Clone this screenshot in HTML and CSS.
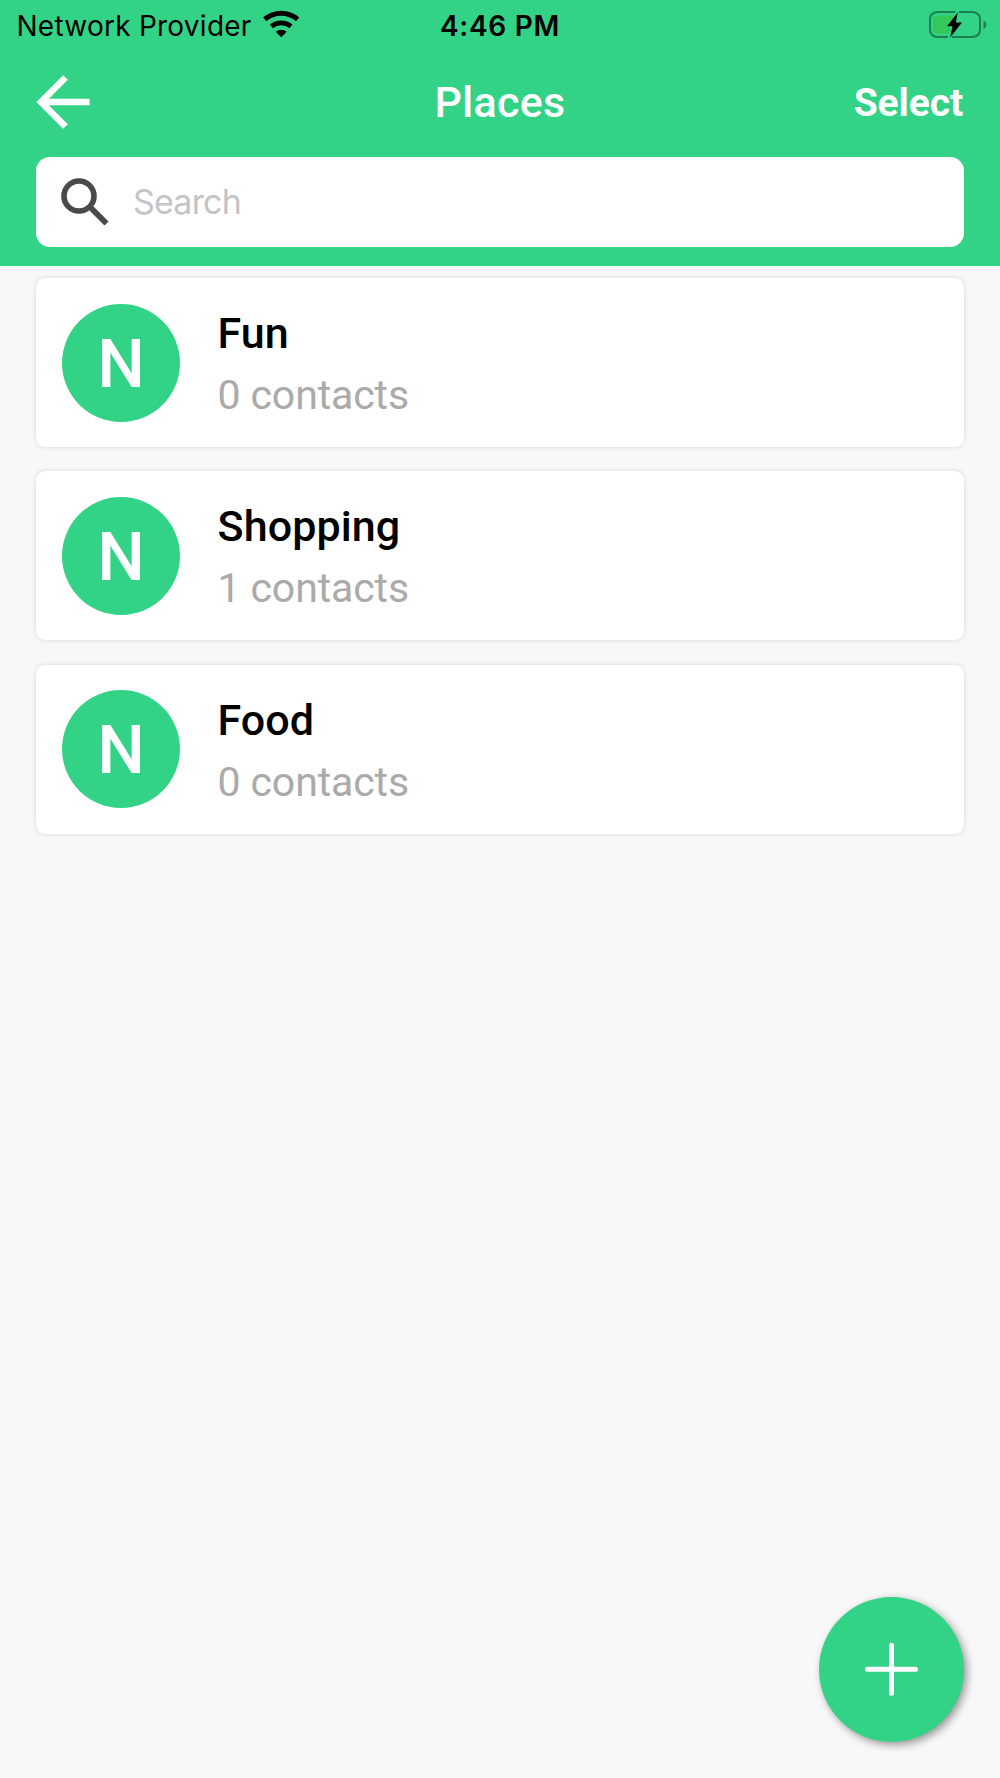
FILE: index.html
```html
<!DOCTYPE html>
<html lang="en">
<head>
<meta charset="utf-8">
<title>Places</title>
<link rel="stylesheet" href="styles.css">
</head>
<body>
<div class="screen">
  <header class="header">
    <div class="status">
      <div class="carrier">
        <span class="carrier-name">Network Provider</span>
        <svg class="wifi" width="38" height="28" viewBox="0 0 38 28">
          <path d="M1.8 9.4A25 25 0 0 1 34.6 9.4" fill="none" stroke="#000" stroke-width="5"/>
          <path d="M8.4 16.4A15.5 15.5 0 0 1 28 16.4" fill="none" stroke="#000" stroke-width="4.8"/>
          <path d="M12.7 21.8A8.8 8.8 0 0 1 23.7 21.8L18.2 27.2Z"/>
        </svg>
      </div>
      <span class="time">4:46 PM</span>
      <svg class="battery" width="60" height="30" viewBox="0 0 60 30">
        <path d="M27.5 2H10.5Q2 2 2 9.5V19.5Q2 27 10.5 27H20M31 2H43.5Q52 2 52 9.5V19.5Q52 27 43.5 27H24" fill="none" stroke="#1e8050" stroke-width="2"/>
        <path d="M28 5.5H10Q5 5.500 5 10V19Q5 23.500 10 23.500H21.500L23.500 17.500H17.500Z" fill="#34c759"/>
        <path d="M55.500 10.500Q58.500 12 58.500 14.700T55.500 19.500Z" fill="#1e8050"/>
        <path d="M29.800 2.500L19 16.300H24.500L22.200 27.500L34 12.500H27.800Z"/>
      </svg>
    </div>
    <nav class="nav">
      <svg class="back" width="54" height="54" viewBox="0 0 54 54">
        <path d="M29.500 2.500L5 27L29.500 51.500M5 27H53.500" fill="none" stroke="#fff" stroke-width="6.600"/>
      </svg>
      <h1 class="title">Places</h1>
      <span class="select">Select</span>
    </nav>
    <div class="search">
      <svg class="magnifier" width="48" height="48" viewBox="0 0 48 48">
        <circle cx="18" cy="18" r="15" fill="none" stroke="#4a4a4a" stroke-width="5.600"/>
        <path d="M30.500 30.500L45.500 45.500" stroke="#4a4a4a" stroke-width="5.800"/>
        <path d="M27.500 27.500L32 32" stroke="#4a4a4a" stroke-width="4"/>
      </svg>
      <span class="placeholder">Search</span>
    </div>
  </header>
  <main class="list">
    <article class="card">
      <div class="avatar">N</div>
      <div class="info"><div class="name">Fun</div><div class="count">0 contacts</div></div>
    </article>
    <article class="card">
      <div class="avatar">N</div>
      <div class="info"><div class="name">Shopping</div><div class="count">1 contacts</div></div>
    </article>
    <article class="card">
      <div class="avatar">N</div>
      <div class="info"><div class="name">Food</div><div class="count">0 contacts</div></div>
    </article>
  </main>
  <div class="fab">
    <svg width="54" height="54" viewBox="0 0 54 54">
      <path d="M27.500 3.200V51.300M3.400 27.300H51.600" stroke="#fff" stroke-width="5" stroke-linecap="round"/>
    </svg>
  </div>
</div>
</body>
</html>
```
FILE: styles.css
```css
* { box-sizing: border-box; }
body { margin: 0; background: #f8f8f8; font-family: Roboto, sans-serif; }
.screen { position: relative; width: 1000px; height: 1778px; overflow: hidden; background: #f8f8f8; }
.header { height: 266px; background: #32d386; }
.status {
  display: grid; grid-template-columns: 1fr auto 1fr; height: 50px;
  padding: 0 12px 0 16px; line-height: 52px; font-family: Inter, sans-serif; font-size: 28px; color: #000;
}
.carrier { display: flex; gap: 11px; padding-left: 0.5px; }
.carrier-name { letter-spacing: 0.25px; white-space: nowrap; }
.wifi { margin-top: 10px; flex: none; }
.time { margin-left: -4px; font-weight: 600; letter-spacing: 0.7px; }
.battery { justify-self: end; margin-top: 10px; }
.nav {
  display: grid; grid-template-columns: 1fr auto 1fr; align-items: center;
  height: 105px; margin-bottom: 2px; padding: 0 36px; color: #fff;
}
.back { margin-top: -1px; }
.title { margin: -2px 0 0; font-size: 43px; font-weight: 500; line-height: 60px; letter-spacing: 0.3px; }
.select { justify-self: end; padding-right: 1px; font-size: 39px; font-weight: 700; line-height: 60px; letter-spacing: -0.1px; }
.search {
  display: flex; align-items: center; height: 89.6px; margin: 0 36px; padding-left: 24.5px;
  background: #fff; border-radius: 14px;
}
.magnifier { margin-right: 24.5px; }
.placeholder { font-family: Inter, sans-serif; font-size: 34px; line-height: 60px; letter-spacing: -0.8px; color: #c4c4c6; }
.list { display: flex; flex-direction: column; gap: 24.3px; padding: 12px 36px 0; }
.card {
  display: flex; align-items: center; height: 169px; padding-left: 26px;
  background: #fff; border-radius: 9px; box-shadow: 0 0 5px rgba(0, 0, 0, 0.14);
}
.avatar {
  width: 118px; height: 118px; border-radius: 50%; background: #32d386;
  color: #fff; font-size: 67px; font-weight: 500; line-height: 120px; text-align: center;
}
.info { margin-left: 37.5px; padding-top: 3px; line-height: 62px; }
.name { font-size: 43px; font-weight: 500; letter-spacing: 0.1px; color: #000; }
.count { font-size: 41px; letter-spacing: -0.1px; color: #aaa; }
.fab {
  position: absolute; right: 36.5px; bottom: 36.5px; width: 145px; height: 145px;
  display: flex; align-items: center; justify-content: center;
  border-radius: 50%; background: #32d386; box-shadow: 3px 3px 9px rgba(0, 0, 0, 0.4);
}
```
